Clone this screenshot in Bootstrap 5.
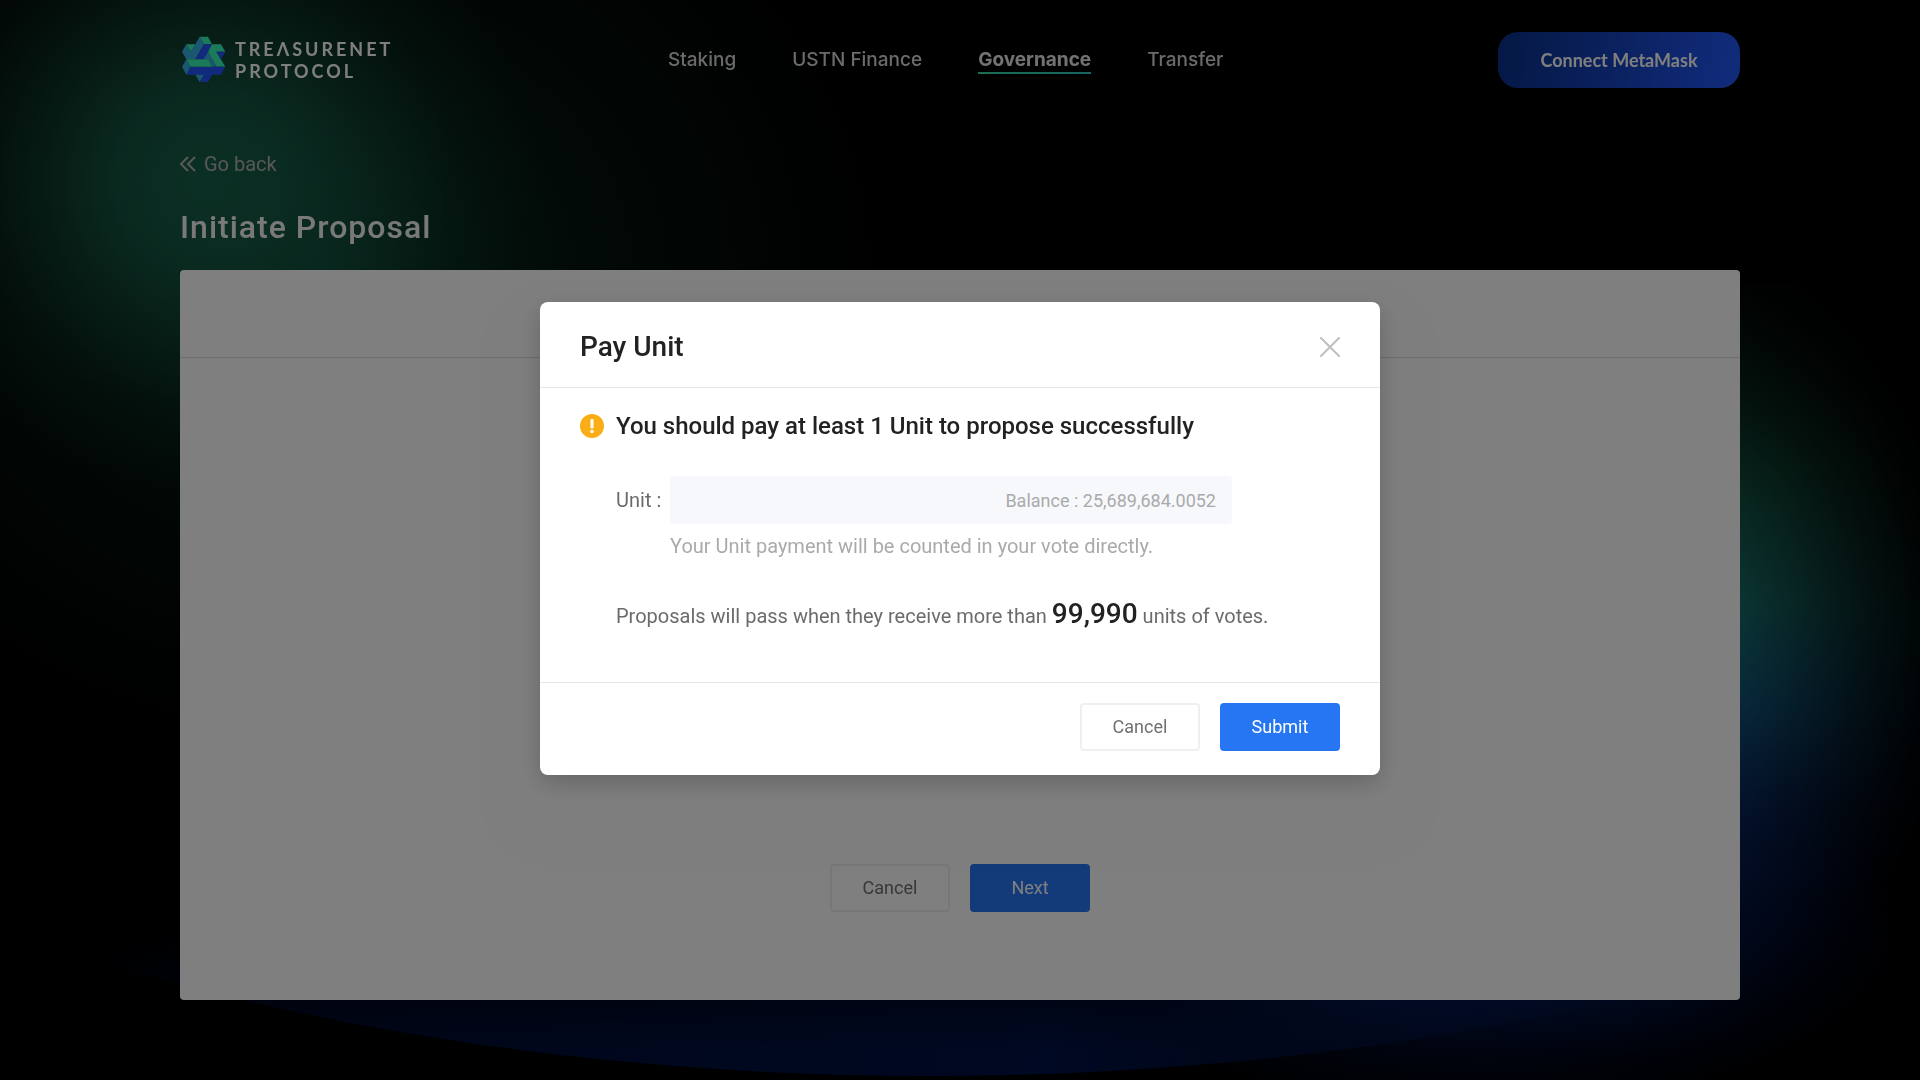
<!DOCTYPE html>
<html lang="en">
<head>
<meta charset="utf-8">
<meta name="viewport" content="width=device-width, initial-scale=1">
<title>Treasurenet Protocol - Initiate Proposal</title>
<link href="https://cdn.jsdelivr.net/npm/bootstrap@5.3.0/dist/css/bootstrap.min.css" rel="stylesheet">
<style>
  body { background: #000; font-family: Roboto, "Liberation Sans", sans-serif; color: #222; }
  .backdrop-art { position: fixed; inset: 0; width: 100%; height: 100%; z-index: -1; }
  .page-shell { max-width: 1608px; padding: 0 24px 80px; }
  .site-header { min-height: 120px; }
  .brand-link { gap: 8px; color: #fff; text-decoration: none; font: 700 18px/22px Lato, sans-serif; letter-spacing: 3px; }
  .main-nav { gap: 56px; font: 500 19px/24px Inter, sans-serif; }
  .main-nav .nav-link { padding: 2px 0 0; color: #d6d6d6; border-bottom: 2px solid transparent; font-weight: 500; }
  .main-nav .nav-link.active { color: #e6e6e6; font-weight: 700; border-image: linear-gradient(90deg, #35dba4, #2fc9c4) 1; }
  .wallet-btn { width: 242px; height: 56px; border: 0; border-radius: 20px; color: #fff; background: linear-gradient(100deg, #0a3088, #2358fa); font: 700 18px/24px Lato, sans-serif; }
  .back-link { gap: 8px; margin-top: 32px; color: #b0b0b0; font-size: 20px; line-height: 24px; text-decoration: none; }
  .page-title { margin: 32px 0 24px; color: #f2f2f2; font-size: 32px; line-height: 38px; font-weight: 500; letter-spacing: 1px; }
  .panel { background: #fff; border-radius: 4px; }
  .panel-head { height: 88px; border-bottom: 1px solid #dcdcdc; }
  .panel-actions { gap: 20px; padding-bottom: 88px; }
  .act { width: 120px; height: 48px; border-radius: 4px; font-size: 18px; line-height: 24px; padding: 0; }
  .act-plain { border: 2px solid #efefef; color: #707070; background: #fff; }
  .act-main { border: 0; color: #fff; background: #2676f4; }
  .pay-dialog { max-width: 840px; margin: 302px auto 0; }
  .pay-content { border: 0; border-radius: 8px; box-shadow: 0 8px 24px rgba(0,0,0,.2), 0 36px 72px 60px rgba(0,0,0,.014); }
  .pay-head { height: 86px; padding: 4px 40px 0; border-bottom: 1px solid #e6e6e6; }
  .pay-head .modal-title { font-size: 28px; line-height: 34px; font-weight: 500; color: #222; }
  .close-btn { border: 0; padding: 0; background: none; line-height: 0; }
  .pay-body { padding: 24px 40px 46px; }
  .notice { gap: 12px; font-size: 24px; line-height: 28px; font-weight: 500; color: #222; margin: 0; }
  .pay-fields { padding: 36px 0 0 36px; font-size: 20px; color: #6b6b6b; line-height: 28px; }
  .unit-grid { display: grid; grid-template-columns: 46px 562px; column-gap: 8px; row-gap: 8px; align-items: center; }
  .unit-box { height: 48px; border-radius: 4px; background: #f6f8fb; }
  .unit-box .form-control, .unit-box .input-group-text { border: 0; background: transparent; font-size: 18px; padding: 0 16px; }
  .unit-box .input-group-text { color: #aaa; }
  .hint { grid-column: 2; color: #aaa; }
  .rule-text { margin: 34px 0 0; line-height: 40px; }
  .rule-text strong { font-size: 28px; font-weight: 500; color: #222; }
  .pay-foot { gap: 20px; padding: 20px 40px 24px; border-top: 1px solid #e6e6e6; }
</style>
<script src="https://cdn.jsdelivr.net/npm/bootstrap@5.3.0/dist/js/bootstrap.bundle.min.js"></script>
</head>
<body>
<svg class="backdrop-art" viewBox="0 0 1920 1080" preserveAspectRatio="none" aria-hidden="true">
  <defs>
    <radialGradient id="glowCore"><stop offset="0" stop-color="#1a6b53" stop-opacity=".85"/><stop offset=".25" stop-color="#1a6b53" stop-opacity=".72"/><stop offset=".5" stop-color="#1a6b53" stop-opacity=".4"/><stop offset=".75" stop-color="#1a6b53" stop-opacity=".13"/><stop offset="1" stop-color="#1a6b53" stop-opacity="0"/></radialGradient>
    <radialGradient id="glowWide"><stop offset="0" stop-color="#0e4a38" stop-opacity=".75"/><stop offset=".5" stop-color="#0a3022" stop-opacity=".36"/><stop offset="1" stop-color="#0a3022" stop-opacity="0"/></radialGradient>
    <linearGradient id="sideHue" x1="0" y1="284" x2="0" y2="1080" gradientUnits="userSpaceOnUse">
      <stop offset="0" stop-color="#0c4434"/><stop offset=".24" stop-color="#1a765c"/><stop offset=".4" stop-color="#1c8480"/><stop offset=".53" stop-color="#146898"/><stop offset=".65" stop-color="#0e4090"/><stop offset=".78" stop-color="#062470"/><stop offset="1" stop-color="#030c34"/>
    </linearGradient>
    <radialGradient id="sideFade"><stop offset="0" stop-color="#fff"/><stop offset=".25" stop-color="#fff" stop-opacity=".9"/><stop offset=".5" stop-color="#fff" stop-opacity=".58"/><stop offset=".75" stop-color="#fff" stop-opacity=".24"/><stop offset=".9" stop-color="#fff" stop-opacity=".07"/><stop offset="1" stop-color="#fff" stop-opacity="0"/></radialGradient>
    <mask id="sideMask" maskUnits="userSpaceOnUse" x="1300" y="284" width="620" height="796"><ellipse cx="1630" cy="640" rx="330" ry="430" fill="url(#sideFade)"/></mask>
    <radialGradient id="lowGlow"><stop offset="0" stop-color="#0a2a80"/><stop offset=".5" stop-color="#06206a" stop-opacity=".5"/><stop offset="1" stop-color="#041040" stop-opacity="0"/></radialGradient>
    <linearGradient id="bowl" x1="60" y1="0" x2="1720" y2="0" gradientUnits="userSpaceOnUse"><stop offset="0" stop-color="#001246" stop-opacity="0"/><stop offset=".12" stop-color="#001246" stop-opacity=".7"/><stop offset=".6" stop-color="#001246"/><stop offset="1" stop-color="#001246" stop-opacity="0"/></linearGradient>
    <linearGradient id="bowlDown" x1="0" y1="920" x2="0" y2="1050" gradientUnits="userSpaceOnUse"><stop offset="0" stop-color="#fff" stop-opacity="0"/><stop offset=".5" stop-color="#fff" stop-opacity=".5"/><stop offset="1" stop-color="#fff"/></linearGradient>
    <mask id="bowlMask" maskUnits="userSpaceOnUse" x="0" y="920" width="1920" height="160"><rect y="920" width="1920" height="160" fill="url(#bowlDown)"/></mask>
  </defs>
  <ellipse cx="330" cy="270" rx="560" ry="480" fill="url(#glowWide)"/>
  <ellipse cx="205" cy="175" rx="330" ry="320" fill="url(#glowCore)"/>
  <g mask="url(#bowlMask)"><ellipse cx="930" cy="392" rx="1500" ry="684" fill="url(#bowl)"/></g>
  <ellipse cx="1480" cy="920" rx="440" ry="200" fill="url(#lowGlow)"/>
  <g mask="url(#sideMask)"><rect x="1300" y="284" width="620" height="796" fill="url(#sideHue)"/></g>
</svg>

<div class="page-shell container-fluid min-vh-100 d-flex flex-column">
  <header class="site-header d-flex align-items-center justify-content-between">
    <a class="brand-link d-flex align-items-center" href="#" aria-label="Treasurenet Protocol">
      <svg width="47" height="50" viewBox="7 11 141 150" aria-hidden="true">
        <path fill="#36aee0" d="M66 16 79 39 53 84H26L13 61 26 39 40 61Z"/>
        <path fill="#36f5b2" d="M66 16H91L103 39H79ZM26 39H53L40 61Z"/>
        <path fill="#2455fa" d="M79 39H103L91 61 104 84H53Z"/>
        <path fill="#36aee0" d="M91 61 117 106H104L92 84H78ZM26 84 39 106 26 130 13 106Z"/>
        <path fill="#36f5b2" d="M103 39H130L143 61H116L143 106H117L91 61Z"/>
        <path fill="#2455fa" d="M116 61H143L130 84Z"/>
        <path fill="#2455fa" d="M39 106H143L130 130H103L91 152H66L79 130H26Z"/>
        <path fill="#36aee0" d="M53 130H79L66 152Z"/>
        <path fill="#36f5b2" d="M26 84H92L104 106H39Z"/>
      </svg>
      <span>TREΛSURENET<br>PROTOCOL</span>
    </a>
    <nav class="main-nav nav" aria-label="Main">
      <a class="nav-link" href="#">Staking</a>
      <a class="nav-link" href="#">USTN Finance</a>
      <a class="nav-link active" href="#" aria-current="page">Governance</a>
      <a class="nav-link" href="#">Transfer</a>
    </nav>
    <button class="wallet-btn" type="button">Connect MetaMask</button>
  </header>

  <main class="d-flex flex-column flex-grow-1">
    <a class="back-link d-flex align-items-center align-self-start" href="#">
      <svg width="16" height="16" viewBox="0 0 16 16" fill="none" stroke="currentColor" stroke-width="2" aria-hidden="true"><path d="M8 1 1 8l7 7M15 1 8 8l7 7"/></svg>
      <span>Go back</span>
    </a>
    <h1 class="page-title">Initiate Proposal</h1>
    <section class="panel d-flex flex-column flex-grow-1">
      <div class="panel-head"></div>
      <div class="panel-actions d-flex justify-content-center mt-auto">
        <button class="btn act act-plain" type="button">Cancel</button>
        <button class="btn act act-main" type="button">Next</button>
      </div>
    </section>
  </main>
</div>

<div class="modal-backdrop show"></div>
<div class="modal show d-block" tabindex="-1" role="dialog" aria-modal="true" aria-labelledby="payTitle">
  <div class="modal-dialog pay-dialog">
    <form class="modal-content pay-content">
      <div class="pay-head d-flex align-items-center justify-content-between">
        <h2 class="modal-title" id="payTitle">Pay Unit</h2>
        <button class="close-btn" type="button" aria-label="Close">
          <svg width="20" height="20" viewBox="0 0 20 20" stroke="#bfbfbf" stroke-width="2" stroke-linecap="round"><path d="M1 1 19 19M19 1 1 19"/></svg>
        </button>
      </div>
      <div class="pay-body">
        <p class="notice d-flex align-items-center">
          <svg width="24" height="24" viewBox="0 0 24 24" aria-hidden="true"><circle cx="12" cy="12" r="12" fill="#faad14"/><rect x="10.5" y="5" width="3" height="9.5" rx="1" fill="#fff"/><circle cx="12" cy="17.5" r="1.8" fill="#fff"/></svg>
          <span>You should pay at least 1 Unit to propose successfully</span>
        </p>
        <div class="pay-fields">
          <div class="unit-grid">
            <label for="unitAmount" class="text-nowrap">Unit :</label>
            <div class="unit-box input-group flex-nowrap">
              <input class="form-control" id="unitAmount" type="text" inputmode="decimal">
              <span class="input-group-text">Balance : 25,689,684.0052</span>
            </div>
            <div class="hint">Your Unit payment will be counted in your vote directly.</div>
          </div>
          <p class="rule-text">Proposals will pass when they receive more than <strong>99,990</strong> units of votes.</p>
        </div>
      </div>
      <div class="pay-foot d-flex justify-content-end">
        <button class="btn act act-plain" type="button">Cancel</button>
        <button class="btn act act-main" type="submit">Submit</button>
      </div>
    </form>
  </div>
</div>
</body>
</html>
